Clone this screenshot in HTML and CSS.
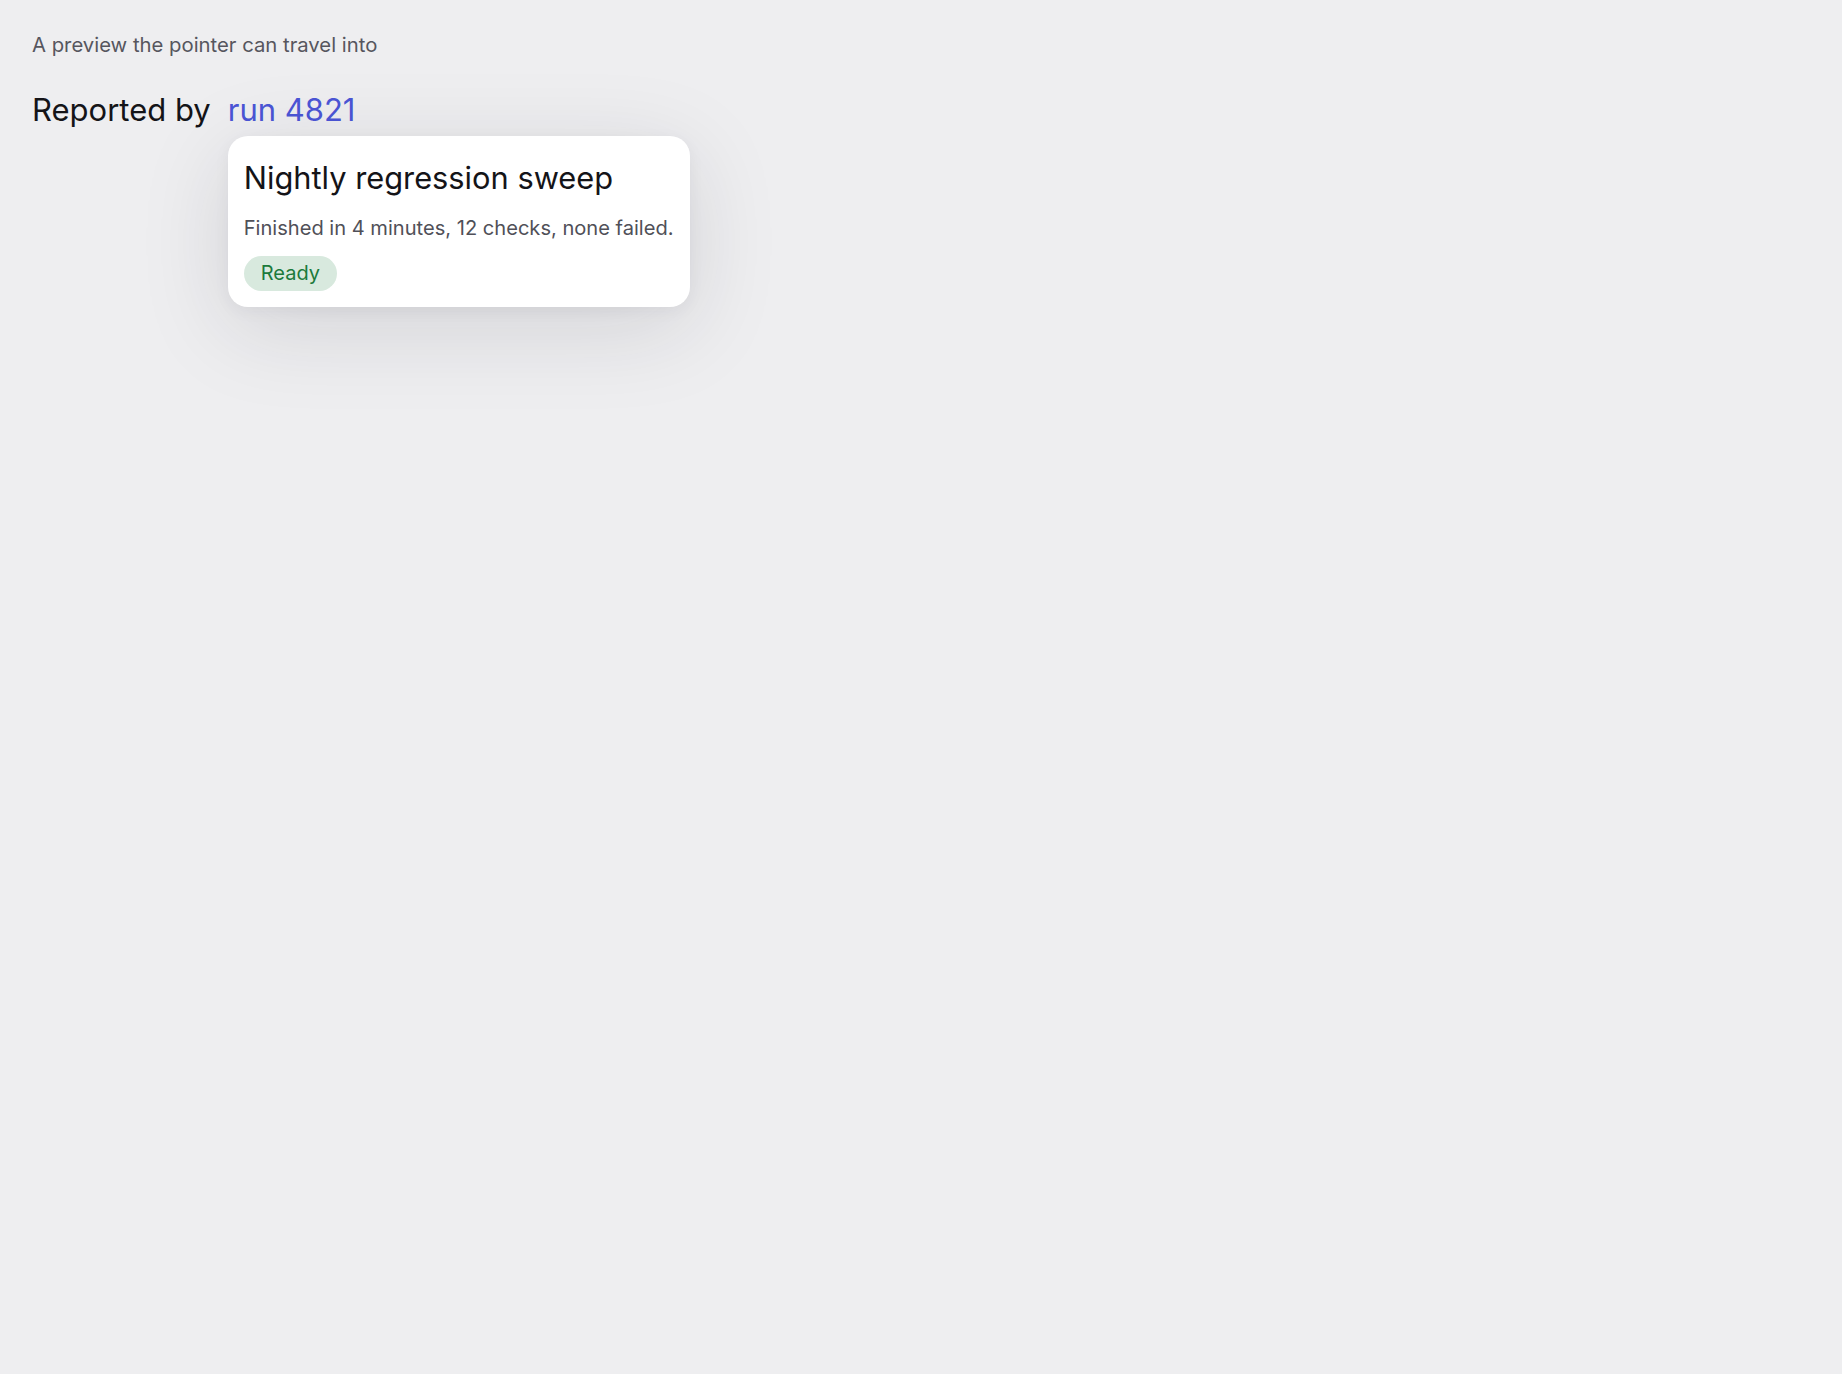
FILE: index.html
```html
<!DOCTYPE html>
<html lang="en">
<head>
<meta charset="utf-8">
<title>Preview</title>
<link rel="stylesheet" href="styles.css">
</head>
<body>
<main class="page">
  <p class="caption">A preview the pointer can travel into</p>
  <div class="line">
    <span class="label">Reported by</span>
    <span class="anchor">
      <a class="link" href="#">run 4821</a>
      <div class="card">
        <h2 class="card-title">Nightly regression sweep</h2>
        <p class="card-text">Finished in 4 minutes, 12 checks, none failed.</p>
        <span class="badge">Ready</span>
      </div>
    </span>
  </div>
</main>
</body>
</html>
```
FILE: styles.css
```css
html, body {
  margin: 0;
  padding: 0;
}
body {
  background: #eeeef0;
  font-family: Inter, "Noto Sans", sans-serif;
  color: #16161a;
  min-height: 100vh;
}
.page {
  padding: 32px 32px;
}
.caption {
  margin: 0;
  font-size: 20.3px;
  line-height: 26px;
  color: #56565e;
}
.line {
  margin-top: 32px;
  display: flex;
  align-items: baseline;
  gap: 17px;
  font-size: 31px;
  line-height: 40px;
}
.label {
  color: #141418;
}
.anchor {
  position: relative;
}
.link {
  color: #4b55d6;
  text-decoration: none;
}
.card {
  position: absolute;
  left: 0;
  top: 46px;
  width: 430px;
  padding: 21px 16px 16px;
  background: #ffffff;
  border-radius: 20px;
  box-shadow: 0 20px 90px rgba(30, 30, 50, 0.13), 0 4px 16px rgba(30, 30, 50, 0.05);
}
.card-title {
  margin: 0;
  font-size: 30.8px;
  font-weight: 400;
  line-height: 42px;
  color: #141418;
  white-space: nowrap;
}
.card-text {
  margin: 16px 0 8px;
  font-size: 20.1px;
  line-height: 26px;
  color: #505058;
  white-space: nowrap;
}
.badge {
  display: inline-block;
  padding: 4px 17px;
  border-radius: 999px;
  background: #d8e9de;
  color: #1c7a3c;
  font-size: 20px;
  line-height: 27px;
}
```
